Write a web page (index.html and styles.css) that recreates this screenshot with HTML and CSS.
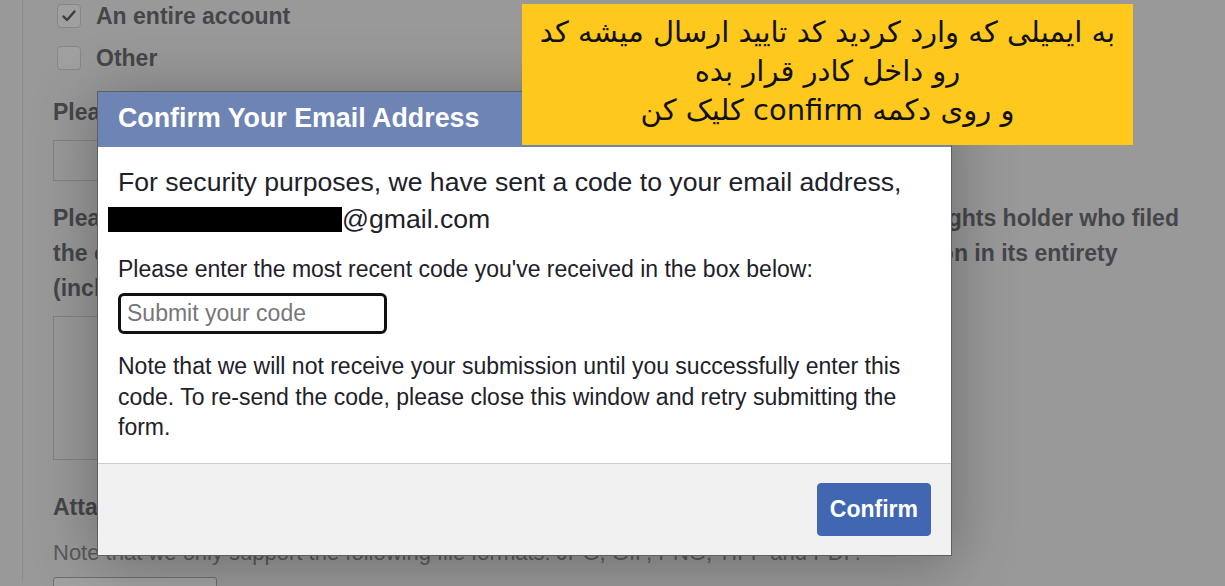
FILE: index.html
```html
<!DOCTYPE html>
<html lang="en">
<head>
<meta charset="UTF-8" />
<meta name="viewport" content="width=device-width, initial-scale=1" />
<title>Confirm Your Email Address</title>
<link rel="stylesheet" href="styles.css">
</head>
<body>

<div class="page">
  <div class="checks">
    <div class="check-row">
      <span class="box">
        <svg width="16" height="16" viewBox="0 0 16 16"><path d="M2.5 8.5 L6 12 L13.5 3.5" fill="none" stroke="#3c3d40" stroke-width="2.4" stroke-linecap="round" stroke-linejoin="round"/></svg>
      </span>
      <span>An entire account</span>
    </div>
    <div class="check-row">
      <span class="box"></span>
      <span>Other</span>
    </div>
  </div>

  <p class="label first">Please provide a link to the content you want to report</p>
  <div class="field"></div>

  <p class="label multi">
    <span>Please provide the full name, email address and valid contact information of the rights holder who filed</span>
    <span>the complaint, and include the reason for your report along with the full explanation in its entirety</span>
    <span>(including any other information that may help us review your report)</span>
  </p>
  <div class="field area"></div>

  <p class="label attach">Attachments</p>
  <p class="hint">Note that we only support the following file formats: JPG, GIF, PNG, TIFF and PDF.</p>
  <div class="file-btn"></div>
</div>

<div class="dialog">
  <div class="dialog-head">Confirm Your Email Address</div>
  <div class="dialog-body">
    <p class="lead">For security purposes, we have sent a code to your email address,<br><span class="redact"></span>@gmail.com</p>
    <p class="ask">Please enter the most recent code you've received in the box below:</p>
    <input class="code" type="text" placeholder="Submit your code" />
    <p class="note">Note that we will not receive your submission until you successfully enter this code. To re-send the code, please close this window and retry submitting the form.</p>
  </div>
  <div class="dialog-foot">
    <button type="button" class="confirm">Confirm</button>
  </div>
</div>

<div class="tip" dir="rtl">
  به ایمیلی که وارد کردید کد تایید ارسال میشه کد<br>
  رو داخل کادر قرار بده<br>
  و روی دکمه confirm کلیک کن
</div>

</body>
</html>
```

FILE: styles.css
```css
body {
  margin: 0;
  background: #999999;
  font-family: "Liberation Sans", Arial, sans-serif;
  color: #45464a;
  overflow: hidden;
  height: 586px;
}
.page {
  margin-left: 22px;
  border-left: 1px solid #8b8b8b;
  padding-left: 30px;
  height: 586px;
}
.checks {
  margin-top: -5px;
}
.check-row {
  display: flex;
  align-items: center;
  gap: 15px;
  height: 42px;
  font-size: 23px;
  font-weight: bold;
  padding-left: 4px;
}
.box {
  width: 24px;
  height: 24px;
  box-sizing: border-box;
  border: 1px solid #878787;
  border-radius: 4px;
  background: #a0a0a0;
  display: flex;
  align-items: center;
  justify-content: center;
}
.label {
  margin: 0;
  font-size: 23px;
  font-weight: bold;
  line-height: 35px;
  white-space: nowrap;
}
.label.first {
  margin-top: 16px;
}
.label.multi {
  margin-top: 20px;
}
.label.multi span {
  display: block;
}
.label.attach {
  margin-top: 30px;
}
.field {
  margin-top: 10px;
  height: 39px;
  width: 820px;
  border: 1px solid #828282;
  background: #9a9a9a;
}
.field.area {
  height: 142px;
}
.hint {
  margin: 13px 0 0;
  font-size: 22px;
  line-height: 30px;
  color: #5a5a5a;
  white-space: nowrap;
}
.file-btn {
  margin-top: 9px;
  width: 162px;
  height: 34px;
  border: 1px solid #6e6e6e;
  border-radius: 3px;
  background: #a2a2a2;
}

/* modal */
.dialog {
  position: absolute;
  left: 97px;
  top: 91px;
  width: 853px;
  border: 1px solid #5d6166;
  background: #fff;
  box-shadow: 0 6px 60px rgba(0,0,0,0.3);
  color: #1d2129;
}
.dialog-head {
  height: 55px;
  background: #6d84b4;
  color: #fff;
  font-size: 26.8px;
  font-weight: bold;
  line-height: 53px;
  padding-left: 20px;
}
.dialog-body {
  padding: 17px 20px 20px;
}
.lead {
  margin: 0;
  font-size: 26.6px;
  line-height: 37px;
}
.redact {
  display: inline-block;
  width: 234px;
  height: 25px;
  margin-left: -10px;
  background: #000;
  vertical-align: -4px;
}
.ask {
  margin: 16px 0 0;
  font-size: 23px;
  line-height: 30px;
}
.code {
  display: block;
  margin-top: 9px;
  width: 269px;
  height: 41px;
  box-sizing: border-box;
  border: 3px solid #111;
  border-radius: 6px;
  padding: 0 6px;
  font-family: "Liberation Sans", Arial, sans-serif;
  font-size: 23px;
  outline: none;
}
.code::placeholder {
  color: #76777a;
}
.note {
  margin: 17px 0 0;
  font-size: 23px;
  line-height: 30.5px;
}
.dialog-foot {
  border-top: 1px solid #cdcdcd;
  background: #f1f1f1;
  padding: 19px 20px 19px;
  display: flex;
  justify-content: flex-end;
}
.confirm {
  height: 53px;
  padding: 0 12px;
  background: #4267b2;
  border: 1px solid #4267b2;
  border-radius: 4px;
  color: #fff;
  font-family: "Liberation Sans", Arial, sans-serif;
  font-size: 23px;
  font-weight: bold;
}

/* annotation */
.tip {
  position: absolute;
  left: 522px;
  top: 4px;
  width: 611px;
  height: 141px;
  box-sizing: border-box;
  padding-top: 9px;
  background: #fec91c;
  color: #111;
  font-family: "DejaVu Sans", "Noto Sans", sans-serif;
  font-size: 29px;
  line-height: 39px;
  text-align: center;
}
```
